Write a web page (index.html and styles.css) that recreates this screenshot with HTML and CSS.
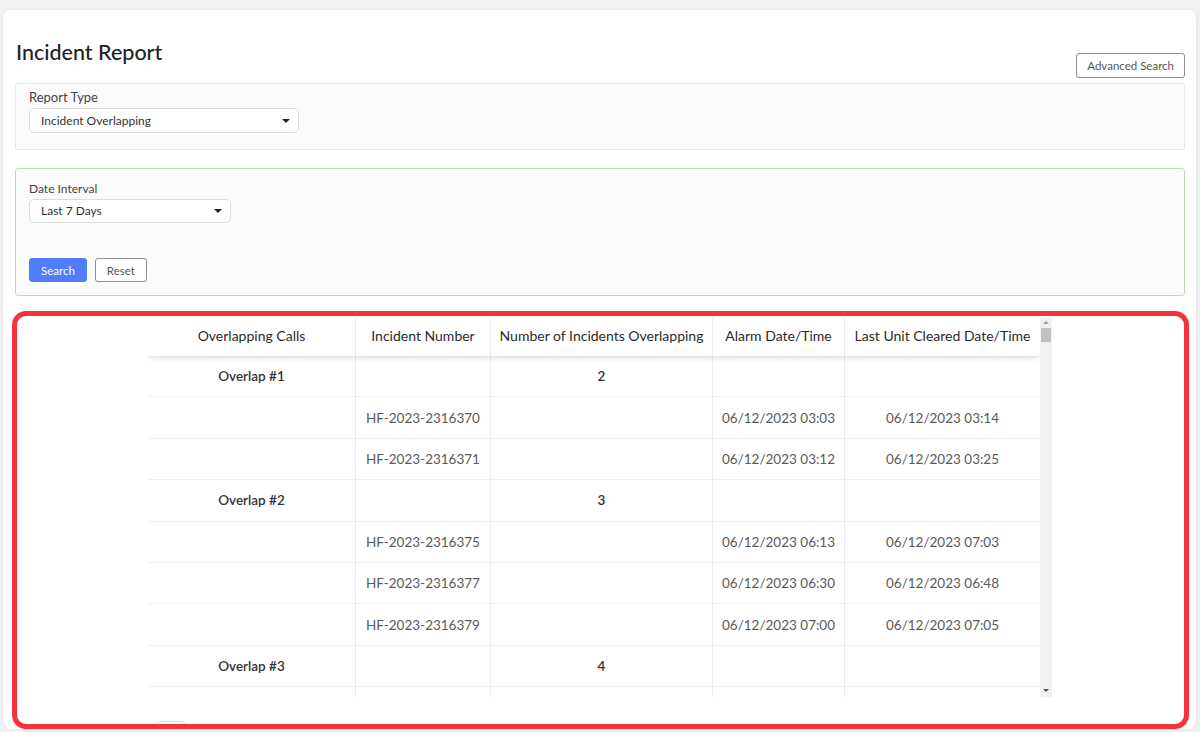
FILE: index.html
```html
<!DOCTYPE html>
<html>
<head>
<title>Incident Report</title>
<link rel="stylesheet" href="styles.css">
</head>

<body>
<div class="card">
    <div class="page-head">
        <h1 class="title">Incident Report</h1>
        <button class="btn btn-outline">Advanced Search</button>
    </div>

    <div class="panel">
        <label class="field-label big">Report Type</label>
        <div class="select wide">Incident Overlapping<span class="caret"></span></div>
    </div>

    <div class="panel filters">
        <label class="field-label">Date Interval</label>
        <div class="select">Last 7 Days<span class="caret"></span></div>
        <div class="actions">
            <button class="btn btn-primary">Search</button>
            <button class="btn btn-outline">Reset</button>
        </div>
    </div>

    <!-- results grid with its own scroll bar -->
    <div class="grid-wrap">
        <div class="grid">
            <div class="grid-head">
                <div class="cell">Overlapping Calls</div>
                <div class="cell">Incident Number</div>
                <div class="cell">Number of Incidents Overlapping</div>
                <div class="cell">Alarm Date/Time</div>
                <div class="cell">Last Unit Cleared Date/Time</div>
            </div>
            <div class="grid-row group">
                <div class="cell">Overlap #1</div><div class="cell"></div><div class="cell">2</div><div class="cell"></div><div class="cell"></div>
            </div>
            <div class="grid-row">
                <div class="cell"></div><div class="cell">HF-2023-2316370</div><div class="cell"></div><div class="cell">06/12/2023 03:03</div><div class="cell">06/12/2023 03:14</div>
            </div>
            <div class="grid-row">
                <div class="cell"></div><div class="cell">HF-2023-2316371</div><div class="cell"></div><div class="cell">06/12/2023 03:12</div><div class="cell">06/12/2023 03:25</div>
            </div>
            <div class="grid-row group">
                <div class="cell">Overlap #2</div><div class="cell"></div><div class="cell">3</div><div class="cell"></div><div class="cell"></div>
            </div>
            <div class="grid-row">
                <div class="cell"></div><div class="cell">HF-2023-2316375</div><div class="cell"></div><div class="cell">06/12/2023 06:13</div><div class="cell">06/12/2023 07:03</div>
            </div>
            <div class="grid-row">
                <div class="cell"></div><div class="cell">HF-2023-2316377</div><div class="cell"></div><div class="cell">06/12/2023 06:30</div><div class="cell">06/12/2023 06:48</div>
            </div>
            <div class="grid-row">
                <div class="cell"></div><div class="cell">HF-2023-2316379</div><div class="cell"></div><div class="cell">06/12/2023 07:00</div><div class="cell">06/12/2023 07:05</div>
            </div>
            <div class="grid-row group">
                <div class="cell">Overlap #3</div><div class="cell"></div><div class="cell">4</div><div class="cell"></div><div class="cell"></div>
            </div>
            <div class="grid-row">
                <div class="cell"></div><div class="cell"></div><div class="cell"></div><div class="cell"></div><div class="cell"></div>
            </div>
        </div>
        <div class="scrollbar">
            <span class="arrow up"></span>
            <span class="thumb"></span>
            <span class="arrow down"></span>
        </div>
    </div>

    <div class="pager"></div>

    <div class="highlight"></div>
</div>
</body>
</html>
```

FILE: styles.css
```css
* {
    box-sizing: border-box;
}
html, body {
    height: 100%;
}
body {
    margin: 0;
    padding: 10px 4px 3px 3px;
    background-color: #f1f1f4;
    font: 13.5px Lato, "Open Sans", sans-serif;
    color: #333;
    overflow: hidden;
}
.card {
    position: relative;
    height: 100%;
    background-color: #fff;
    border-radius: 8px;
    box-shadow: 0 0 3px rgba(0, 0, 0, 0.08);
    padding: 30px 11px 0 12px;
    overflow: hidden;
}
.page-head {
    display: flex;
    justify-content: space-between;
    align-items: flex-end;
}
.title {
    margin: 0 0 14px 1px;
    font-size: 21.5px;
    line-height: 24px;
    font-weight: 500;
    color: #222;
}
.btn {
    font: 11.5px Lato, "Open Sans", sans-serif;
    height: 25px;
    padding: 0 11px;
    border-radius: 3px;
    cursor: pointer;
}
.page-head .btn {
    padding: 0 10px;
}
.btn-outline {
    background-color: #fff;
    border: 1px solid #8f8f8f;
    color: #555;
}
.btn-primary {
    background-color: #4f7dfb;
    border: 1px solid #4f7dfb;
    color: #fff;
}
.panel {
    margin-top: 5px;
    background-color: #fbfbfb;
    border: 1px solid #e7e7e7;
    border-radius: 3px;
    padding: 5px 13px 16px;
}
.panel.filters {
    margin-top: 18px;
    border-color: #b9dbb9;
    padding: 12px 13px 13px;
}
.field-label {
    display: block;
    font-size: 12px;
    line-height: 16px;
    color: #444;
}
.field-label.big {
    font-size: 13px;
    line-height: 16px;
}
.select {
    position: relative;
    width: 202px;
    height: 24px;
    margin-top: 2px;
    padding-left: 11px;
    line-height: 22px;
    font-size: 12px;
    color: #333;
    background-color: #fff;
    border: 1px solid #dcdcdc;
    border-radius: 5px;
}
.select.wide {
    width: 270px;
    height: 25px;
    margin-top: 3px;
    line-height: 23px;
}
.caret {
    position: absolute;
    right: 8px;
    top: 50%;
    margin-top: -2px;
    border-left: 4px solid transparent;
    border-right: 4px solid transparent;
    border-top: 4px solid #222;
}
.actions {
    display: flex;
    gap: 8px;
    margin-top: 35px;
}
.actions .btn {
    height: 24px;
}

.grid-wrap {
    display: flex;
    width: 904px;
    height: 379px;
    margin: 22px auto 0;
}
.grid {
    flex: 1;
    overflow: hidden;
}
.grid-head,
.grid-row {
    display: grid;
    grid-template-columns: 208px 135px 222px 132px 195px;
}
.grid-head {
    position: relative;
    z-index: 1;
    height: 38px;
    font-size: 14px;
    background-color: #fff;
    border-radius: 3px;
    box-shadow: 0 2px 5px rgba(0, 0, 0, 0.13);
    color: #2b2b2b;
}
.grid-head .cell {
    padding-bottom: 3px;
}
.grid-row {
    height: 41.4px;
    border-bottom: 1px solid #efefef;
    color: #5a5a5a;
}
.grid-row.group {
    color: #333;
    font-weight: 600;
}
.cell {
    display: flex;
    align-items: center;
    justify-content: center;
    border-right: 1px solid #ececec;
    white-space: nowrap;
}
.cell:last-child {
    border-right: none;
}
.scrollbar {
    position: relative;
    width: 12px;
    background-color: #f1f1f1;
}
.thumb {
    position: absolute;
    left: 1px;
    right: 1px;
    top: 10px;
    height: 14px;
    background-color: #c1c1c1;
}
.arrow {
    position: absolute;
    left: 3px;
    border-left: 3px solid transparent;
    border-right: 3px solid transparent;
}
.arrow.up {
    top: 3px;
    border-bottom: 3px solid #a3a3a3;
}
.arrow.down {
    bottom: 5px;
    border-top: 3px solid #505050;
}
.pager {
    width: 30px;
    height: 24px;
    margin: 24px 0 0 141px;
    border: 1px solid #ddd;
    border-radius: 5px;
}
/* marks the results block */
.highlight {
    position: absolute;
    left: 9px;
    top: 301px;
    width: 1177px;
    height: 418px;
    border: 5px solid #f7323f;
    border-radius: 14px;
    pointer-events: none;
}
```
